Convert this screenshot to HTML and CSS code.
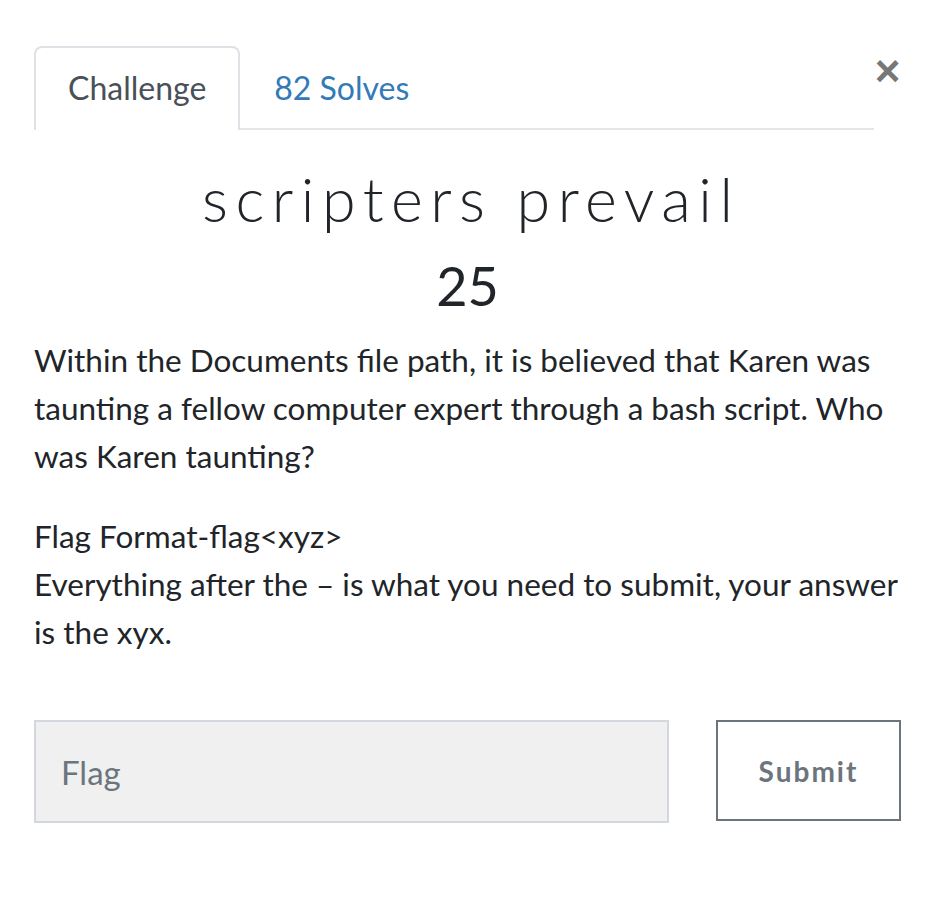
FILE: index.html
```html
<!DOCTYPE html>
<html lang="en">
<head>
<meta charset="utf-8">
<title>Challenge</title>
<link rel="stylesheet" href="styles.css">
</head>
<body>
<div class="modal">
  <div class="header">
    <ul class="tabs">
      <li class="tab active">Challenge</li>
      <li class="tab link">82 Solves</li>
    </ul>
    <button class="close" type="button">&times;</button>
  </div>
  <h3 class="name">scripters prevail</h3>
  <h4 class="value">25</h4>
  <div class="desc">
    <p>Within the Documents file path, it is believed that Karen was taunting a fellow computer expert through a bash script. Who was Karen taunting?</p>
    <p>Flag Format-flag&lt;xyz&gt;<br>Everything after the – is what you need to submit, your answer is the xyx.</p>
  </div>
  <div class="submit-row">
    <input class="flag" type="text" placeholder="Flag">
    <button class="submit" type="button">Submit</button>
  </div>
</div>
</body>
</html>
```
FILE: styles.css
```css
html, body {
  margin: 0;
  padding: 0;
  background: #fff;
}
body {
  font-family: "Lato", "Liberation Sans", sans-serif;
  color: #212529;
}
.modal {
  padding: 46px 43px 0 34px;
}
.header {
  display: flex;
  align-items: flex-start;
}
.tabs {
  list-style: none;
  margin: 0;
  padding: 0;
  width: 840px;
  flex: none;
  display: flex;
  border-bottom: 2px solid #e3e6e9;
}
.tab {
  font-size: 32px;
  line-height: 48px;
  padding: 16px 32px 16px 32px;
  border: 2px solid transparent;
  border-bottom: 0;
  border-top-left-radius: 8px;
  border-top-right-radius: 8px;
  margin-bottom: -2px;
}
.tab.active {
  color: #495057;
  border-color: #dee2e6;
  background: #fff;
  padding-bottom: 18px;
}
.tab.link {
  color: #337ab7;
}
.close {
  flex: none;
  margin-left: auto;
  margin-top: 5px;
  padding: 0;
  border: 0;
  background: none;
  font-family: "Liberation Sans", "Lato", sans-serif;
  font-weight: 700;
  font-size: 44px;
  line-height: 40px;
  color: #777;
  width: 27px;
  text-align: center;
}
.name {
  margin: 35px 0 0;
  text-align: center;
  font-family: "Lato", sans-serif;
  font-weight: 300;
  font-size: 61px;
  letter-spacing: 7.5px;
  text-indent: 7.5px;
  line-height: 68px;
  color: #212529;
}
.value {
  margin: 21px 0 18px;
  text-align: center;
  font-weight: 400;
  font-size: 54px;
  line-height: 64px;
  color: #212529;
}
.desc p {
  margin: 0 0 32px;
  font-size: 31.5px;
  line-height: 48px;
}
.submit-row {
  display: flex;
  gap: 47px;
  margin-top: 64px;
}
.flag {
  flex: 1;
  height: 103px;
  box-sizing: border-box;
  border: 2px solid #d3d8df;
  background: #f0f0f0;
  font-family: "Lato", sans-serif;
  font-size: 33px;
  padding: 0 25px;
  color: #495057;
  outline: none;
}
.flag::placeholder {
  color: #6c757d;
}
.submit {
  width: 185px;
  height: 101px;
  box-sizing: border-box;
  border: 2px solid #6c757d;
  background: #fff;
  color: #6c757d;
  font-family: "Lato", sans-serif;
  font-weight: 700;
  font-size: 28px;
  letter-spacing: 2px;
}
```
